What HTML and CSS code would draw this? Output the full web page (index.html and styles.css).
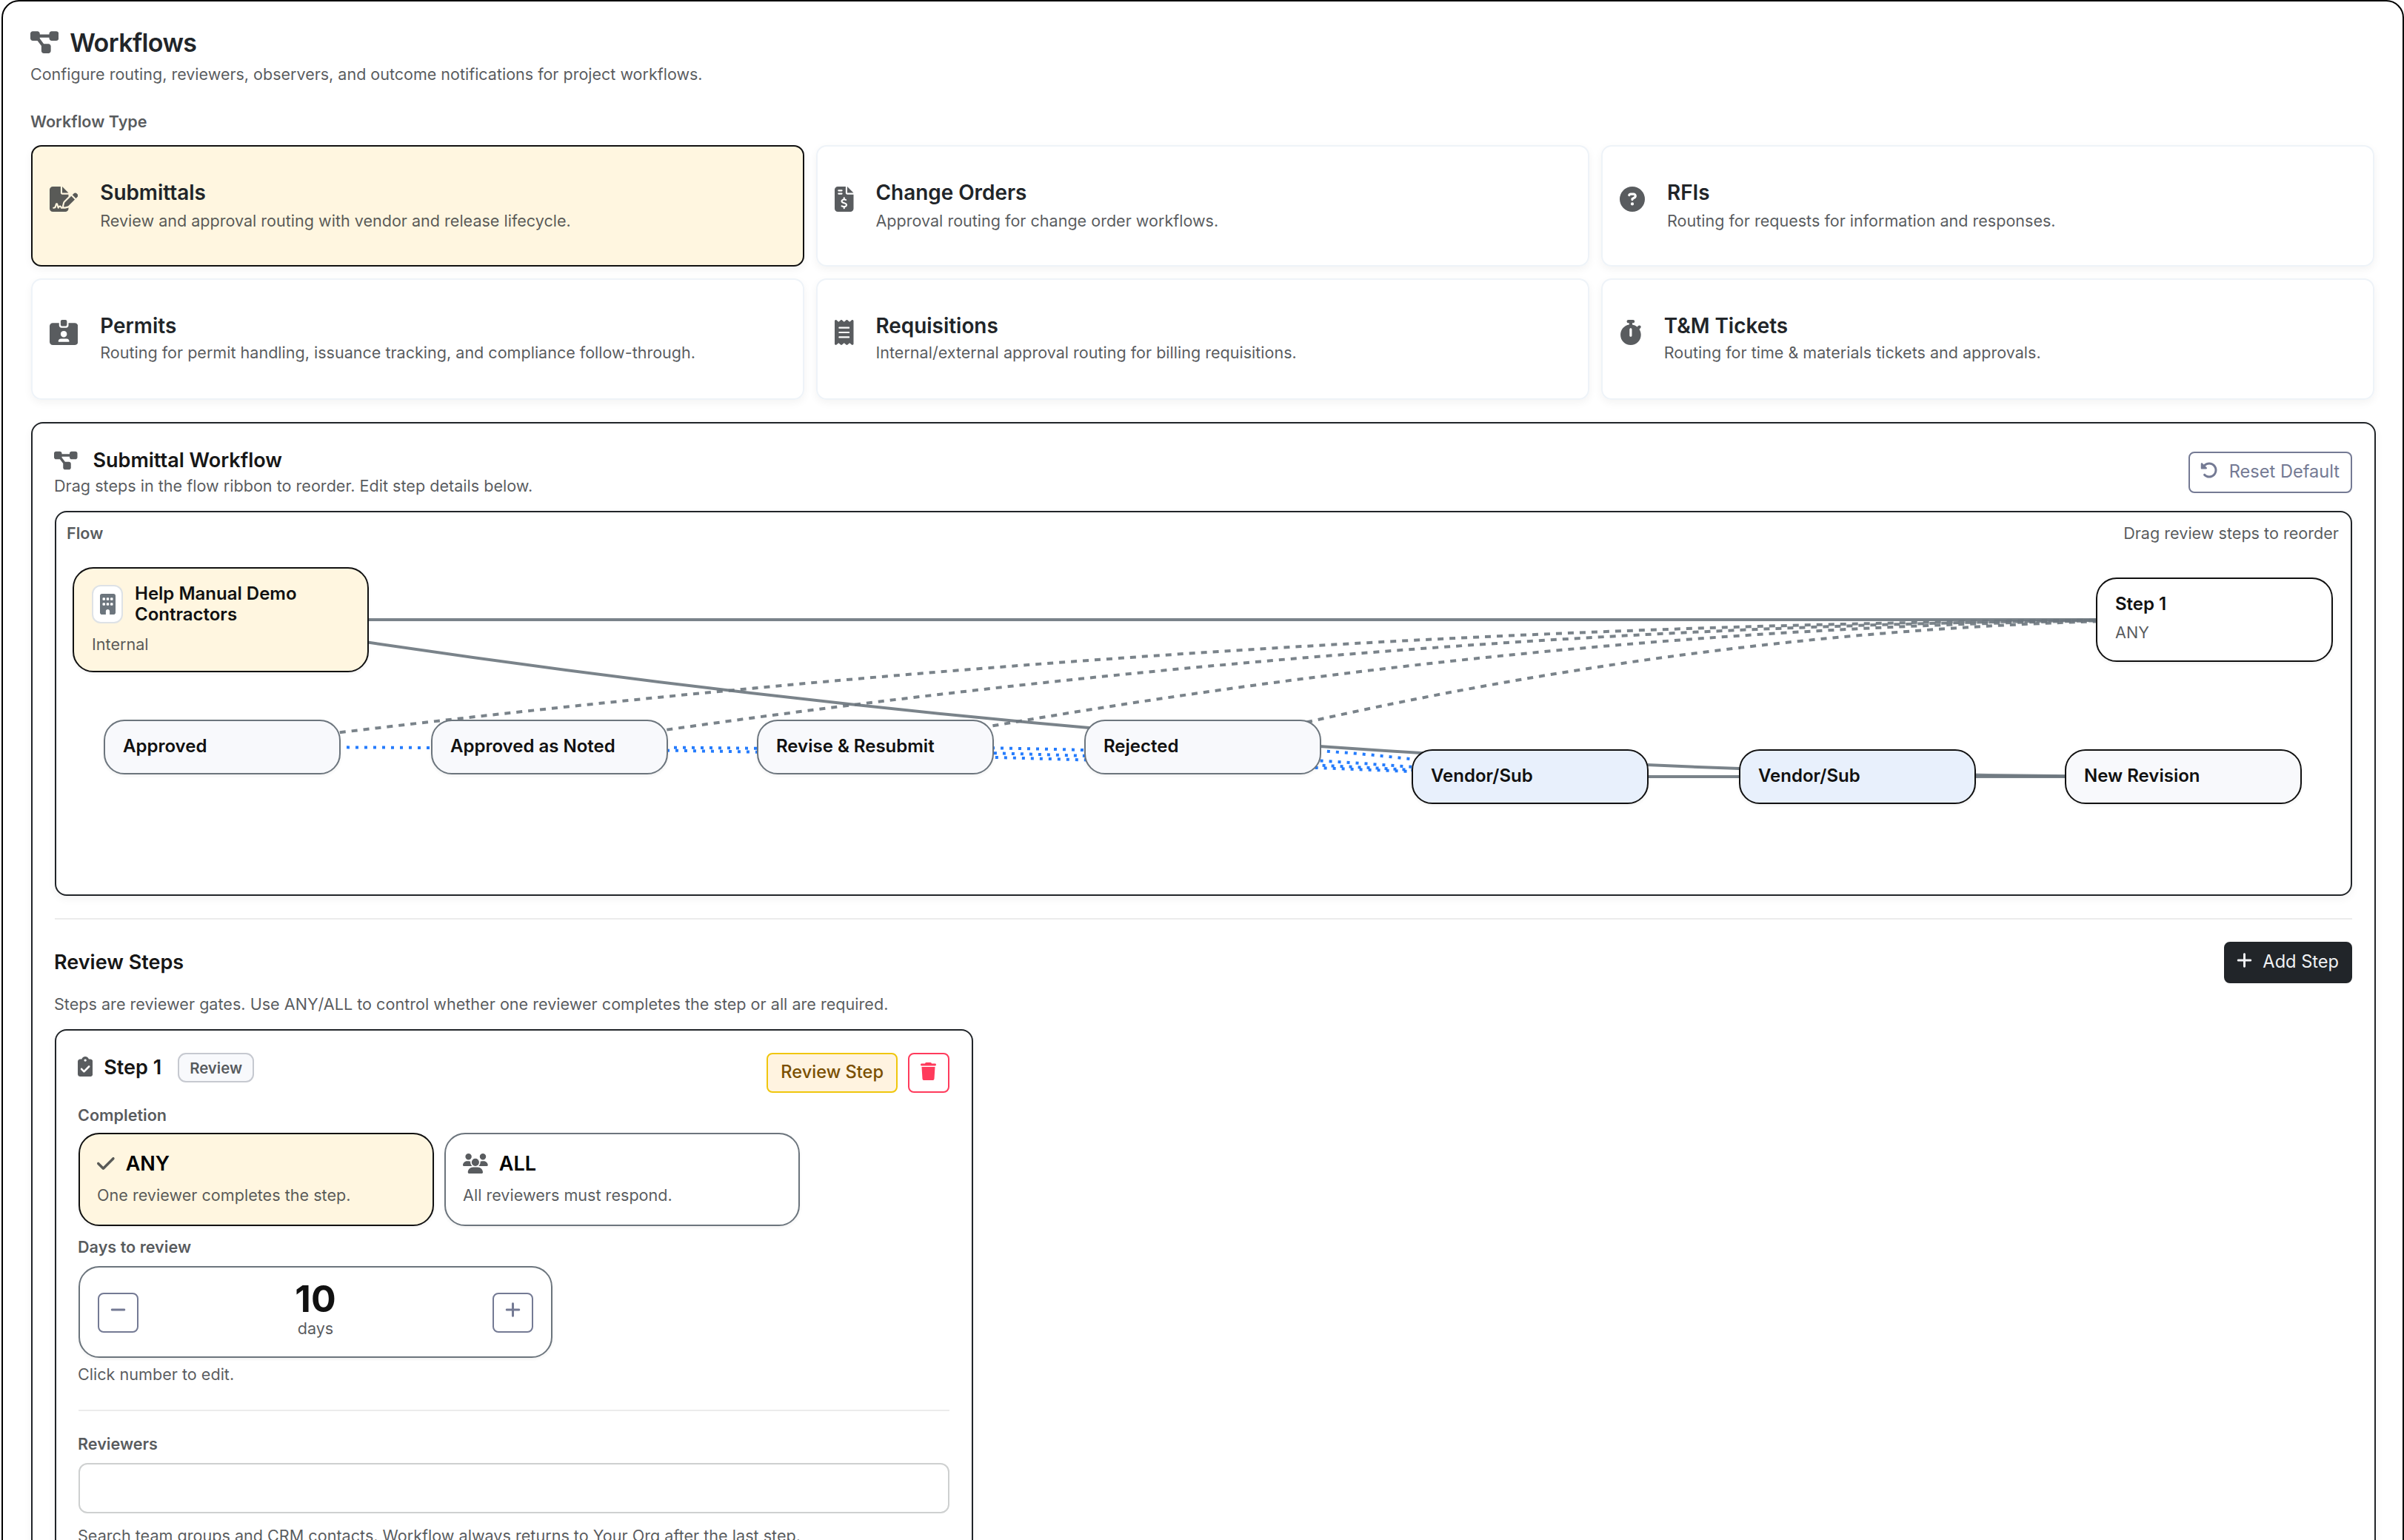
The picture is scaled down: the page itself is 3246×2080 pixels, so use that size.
FILE: index.html
```
<!DOCTYPE html>
<html lang="en">
<head>
    <meta charset="UTF-8">
    <title>Workflows</title>
    <link rel="stylesheet" href="styles.css">
</head>
<body>
    <div class="page">
        <div class="page-header">
            <svg class="icon" viewBox="0 0 576 512"><path d="M0 80C0 53.5 21.5 32 48 32h96c26.5 0 48 21.5 48 48V96H384V80c0-26.5 21.5-48 48-48h96c26.5 0 48 21.5 48 48v96c0 26.5-21.5 48-48 48H432c-26.5 0-48-21.5-48-48V160H192v16c0 1.7-.1 3.4-.3 5L272 288h96c26.5 0 48 21.5 48 48v96c0 26.5-21.5 48-48 48H272c-26.5 0-48-21.5-48-48V336c0-1.7 .1-3.4 .3-5L144 224H48c-26.5 0-48-21.5-48-48V80z"/></svg>
            <h1>Workflows</h1>
        </div>
        <p class="page-desc">Configure routing, reviewers, observers, and outcome notifications for project workflows.</p>

        <div class="label type-label">Workflow Type</div>
        <div class="type-grid">
            <div class="type-card selected">
                <svg class="icon" viewBox="0 0 576 512"><path d="M64 0C28.7 0 0 28.7 0 64V448c0 35.3 28.7 64 64 64H320c35.3 0 64-28.7 64-64V428.7c-2.7 1.1-5.4 2-8.2 2.7l-60.1 15c-3 .7-6 1.2-9 1.4c-.9 .1-1.8 .2-2.7 .2H240c-6.1 0-11.6-3.4-14.3-8.8l-8.8-17.7c-1.7-3.4-5.1-5.5-8.8-5.5s-7.2 2.1-8.8 5.5l-8.8 17.7c-2.9 5.9-9.2 9.4-15.7 8.8s-12.1-5.1-13.9-11.3L144 381l-9.8 32.8c-6.1 20.3-24.8 34.2-46 34.2H80c-8.8 0-16-7.2-16-16s7.2-16 16-16h8.2c7.1 0 13.3-4.6 15.3-11.4l14.9-49.5c3.4-11.3 13.8-19.1 25.6-19.1s22.2 7.7 25.6 19.1l11.6 38.6c7.4-6.2 16.8-9.7 26.8-9.7c15.9 0 30.4 9 37.5 23.2l4.4 8.8h8.9c-3.1-8.8-3.7-18.4-1.4-27.8l15-60.1c2.8-11.3 8.6-21.5 16.8-29.7L384 203.6V160H256c-17.7 0-32-14.3-32-32V0H64zM256 0V128H384L256 0zM549.8 139.7c-15.6-15.6-40.9-15.6-56.6 0l-29.4 29.4 71 71 29.4-29.4c15.6-15.6 15.6-40.9 0-56.6l-14.4-14.4zM311.9 321c-4.1 4.1-7 9.2-8.4 14.9l-15 60.1c-1.4 5.5 .2 11.2 4.2 15.2s9.7 5.6 15.2 4.2l60.1-15c5.6-1.4 10.8-4.3 14.9-8.4L512.1 262.7l-71-71L311.9 321z"/></svg>
                <div>
                    <h3>Submittals</h3>
                    <p>Review and approval routing with vendor and release lifecycle.</p>
                </div>
            </div>
            <div class="type-card">
                <svg class="icon" viewBox="0 0 384 512"><path d="M64 0C28.7 0 0 28.7 0 64V448c0 35.3 28.7 64 64 64H320c35.3 0 64-28.7 64-64V160H256c-17.7 0-32-14.3-32-32V0H64zM256 0V128H384L256 0zM64 80c0-8.8 7.2-16 16-16h64c8.8 0 16 7.2 16 16s-7.2 16-16 16H80c-8.8 0-16-7.2-16-16zm0 64c0-8.8 7.2-16 16-16h64c8.8 0 16 7.2 16 16s-7.2 16-16 16H80c-8.8 0-16-7.2-16-16zm128 72c8.8 0 16 7.2 16 16v17.3c8.5 1.2 16.7 3.1 24.1 5.1c8.5 2.3 13.6 11 11.3 19.6s-11 13.6-19.6 11.3c-11.1-3-22-5.2-32.1-5.3c-8.4-.1-17.4 1.8-23.6 5.5c-5.7 3.4-8.1 7.3-8.1 12.8c0 3.7 1.3 6.5 7.3 10.1c6.9 4.1 16.6 7.1 29.2 10.9l.5 .1c11.3 3.4 25.3 7.6 36.3 14.6c12.1 7.6 22.4 19.7 22.7 38.2c.3 19.3-9.6 33.3-22.9 41.6c-7.7 4.8-16.4 7.6-25.1 9.1V440c0 8.8-7.2 16-16 16s-16-7.2-16-16V422.2c-11.2-2.1-21.7-5.7-30.9-8.9c-2.1-.7-4.2-1.4-6.2-2.1c-8.4-2.8-12.9-11.9-10.1-20.2s11.9-12.9 20.2-10.1c2.5 .8 4.8 1.6 7.1 2.4c13.6 4.6 24.6 8.4 36.3 8.7c9.1 .3 17.9-1.7 23.7-5.3c5.1-3.2 7.9-7.3 7.8-14c-.1-4.6-1.8-7.8-7.7-11.6c-6.8-4.3-16.5-7.4-29-11.2l-1.6-.5c-11-3.3-24.3-7.3-34.8-13.7c-12-7.2-22.6-18.9-22.7-37.3c-.1-19.4 10.8-32.8 23.8-40.5c7.5-4.4 15.8-7.2 24.1-8.7V232c0-8.8 7.2-16 16-16z"/></svg>
                <div>
                    <h3>Change Orders</h3>
                    <p>Approval routing for change order workflows.</p>
                </div>
            </div>
            <div class="type-card">
                <svg class="icon" viewBox="0 0 512 512"><path d="M256 512A256 256 0 1 0 256 0a256 256 0 1 0 0 512zM169.8 165.3c7.9-22.3 29.1-37.3 52.8-37.3h58.3c34.9 0 63.1 28.3 63.1 63.1c0 22.6-12.1 43.5-31.7 54.8L280 264.4c-.2 13-10.9 23.6-24 23.6c-13.3 0-24-10.7-24-24V250.5c0-8.6 4.6-16.5 12.1-20.8l44.3-25.4c4.7-2.7 7.6-7.7 7.6-13.1c0-8.4-6.8-15.1-15.1-15.1H222.6c-3.4 0-6.4 2.1-7.5 5.3l-.4 1.2c-4.4 12.5-18.2 19-30.6 14.6s-19-18.2-14.6-30.6l.4-1.2zM224 352a32 32 0 1 1 64 0 32 32 0 1 1 -64 0z"/></svg>
                <div>
                    <h3>RFIs</h3>
                    <p>Routing for requests for information and responses.</p>
                </div>
            </div>
            <div class="type-card tight">
                <svg class="icon" viewBox="0 0 576 512"><path d="M256 0h64c17.7 0 32 14.3 32 32V96c0 17.7-14.3 32-32 32H256c-17.7 0-32-14.3-32-32V32c0-17.7 14.3-32 32-32zM64 64H192v48c0 26.5 21.5 48 48 48h96c26.5 0 48-21.5 48-48V64H512c35.3 0 64 28.7 64 64V448c0 35.3-28.7 64-64 64H64c-35.3 0-64-28.7-64-64V128C0 92.7 28.7 64 64 64zM176 437.3c0 5.9 4.8 10.7 10.7 10.7H389.3c5.9 0 10.7-4.8 10.7-10.7c0-29.5-23.9-53.3-53.3-53.3H229.3c-29.5 0-53.3 23.9-53.3 53.3zM288 352a64 64 0 1 0 0-128 64 64 0 1 0 0 128z"/></svg>
                <div>
                    <h3>Permits</h3>
                    <p>Routing for permit handling, issuance tracking, and compliance follow-through.</p>
                </div>
            </div>
            <div class="type-card tight">
                <svg class="icon" viewBox="0 0 384 512"><path d="M14 2.2C22.5-1.7 32.5-.3 39.6 5.8L80 40.4 120.4 5.8c9-7.7 22.3-7.7 31.2 0L192 40.4 232.4 5.8c9-7.7 22.3-7.7 31.2 0L304 40.4 344.4 5.8c7.1-6.1 17.1-7.5 25.6-3.6s14 12.4 14 21.8V488c0 9.4-5.5 17.9-14 21.8s-18.5 2.5-25.6-3.6L304 471.6l-40.4 34.6c-9 7.7-22.3 7.7-31.2 0L192 471.6l-40.4 34.6c-9 7.7-22.3 7.7-31.2 0L80 471.6 39.6 506.2c-7.1 6.1-17.1 7.5-25.6 3.6S0 497.4 0 488V24C0 14.6 5.5 6.1 14 2.2zM96 144c-8.8 0-16 7.2-16 16s7.2 16 16 16H288c8.8 0 16-7.2 16-16s-7.2-16-16-16H96zM80 352c0 8.8 7.2 16 16 16H288c8.8 0 16-7.2 16-16s-7.2-16-16-16H96c-8.8 0-16 7.2-16 16zM96 240c-8.8 0-16 7.2-16 16s7.2 16 16 16H288c8.8 0 16-7.2 16-16s-7.2-16-16-16H96z"/></svg>
                <div>
                    <h3>Requisitions</h3>
                    <p>Internal/external approval routing for billing requisitions.</p>
                </div>
            </div>
            <div class="type-card tight">
                <svg class="icon" viewBox="0 0 448 512"><path d="M176 0c-17.7 0-32 14.3-32 32s14.3 32 32 32h16V98.4C92.3 113.8 16 200 16 304c0 114.9 93.1 208 208 208s208-93.1 208-208c0-41.8-12.3-80.7-33.5-113.2l24.1-24.1c12.5-12.5 12.5-32.8 0-45.3s-32.8-12.5-45.3 0L355.7 143c-28.1-23-62.2-38.8-99.7-44.6V64h16c17.7 0 32-14.3 32-32s-14.3-32-32-32H224 176zm72 192V320c0 13.3-10.7 24-24 24s-24-10.7-24-24V192c0-13.3 10.7-24 24-24s24 10.7 24 24z"/></svg>
                <div>
                    <h3>T&amp;M Tickets</h3>
                    <p>Routing for time &amp; materials tickets and approvals.</p>
                </div>
            </div>
        </div>

        <div class="panel">
            <div class="panel-header">
                <div>
                    <div class="panel-title">
                        <svg class="icon" viewBox="0 0 576 512"><path d="M0 80C0 53.5 21.5 32 48 32h96c26.5 0 48 21.5 48 48V96H384V80c0-26.5 21.5-48 48-48h96c26.5 0 48 21.5 48 48v96c0 26.5-21.5 48-48 48H432c-26.5 0-48-21.5-48-48V160H192v16c0 1.7-.1 3.4-.3 5L272 288h96c26.5 0 48 21.5 48 48v96c0 26.5-21.5 48-48 48H272c-26.5 0-48-21.5-48-48V336c0-1.7 .1-3.4 .3-5L144 224H48c-26.5 0-48-21.5-48-48V80z"/></svg>
                        <h2>Submittal Workflow</h2>
                    </div>
                    <p>Drag steps in the flow ribbon to reorder. Edit step details below.</p>
                </div>
                <button class="btn btn-reset">
                    <svg class="icon" viewBox="0 0 512 512"><path d="M48.500 224H40c-13.300 0-24-10.700-24-24V72c0-9.700 5.800-18.500 14.800-22.200s19.300-1.700 26.200 5.200L98.600 96.600c87.600-86.500 228.700-86.200 315.800 1c87.500 87.500 87.500 229.300 0 316.800s-229.300 87.500-316.800 0c-12.500-12.500-12.500-32.800 0-45.300s32.800-12.500 45.300 0c62.500 62.500 163.800 62.500 226.300 0s62.500-163.800 0-226.300c-62.200-62.200-162.700-62.500-225.300-1L185 183c6.900 6.900 8.900 17.200 5.200 26.200s-12.500 14.800-22.200 14.800H48.500z"/></svg>
                    Reset Default
                </button>
            </div>

            <div class="flow">
                <div class="flow-header">
                    <span class="label">Flow</span>
                    <span>Drag review steps to reorder</span>
                </div>
                <!-- connectors run centre to centre, under the nodes -->
                <svg class="flow-lines" viewBox="76 692 3098 516">
                    <path class="line" d="M298 837H2990"/>
                    <path class="line" d="M298 837Q1623 1049 2948 1049"/>
                    <path class="line" d="M2066 1049H2507"/>
                    <path class="line" d="M2507 1049H2948"/>
                    <path class="line dashed" d="M300 1009Q1645 837 2990 837"/>
                    <path class="line dashed" d="M742 1009Q1866 837 2990 837"/>
                    <path class="line dashed" d="M1183 1009Q2086.500 837 2990 837"/>
                    <path class="line dashed" d="M1624 1009Q2307 837 2990 837"/>
                    <path class="line dotted" d="M300 1009Q1183 1009 2066 1049"/>
                    <path class="line dotted" d="M742 1009Q1404 1009 2066 1049"/>
                    <path class="line dotted" d="M1183 1009Q1624.500 1009 2066 1049"/>
                    <path class="line dotted" d="M1624 1009Q1845 1009 2066 1049"/>
                </svg>
                <div class="node node-org">
                    <div class="node-org-head">
                        <div class="node-icon">
                            <svg class="icon" viewBox="0 0 384 512"><path d="M48 0C21.500 0 0 21.500 0 48V464c0 26.500 21.500 48 48 48h96V432c0-26.500 21.500-48 48-48s48 21.500 48 48v80h96c26.500 0 48-21.500 48-48V48c0-26.500-21.500-48-48-48H48zM64 240c0-8.800 7.200-16 16-16h32c8.800 0 16 7.200 16 16v32c0 8.800-7.200 16-16 16H80c-8.800 0-16-7.200-16-16V240zm112-16h32c8.800 0 16 7.200 16 16v32c0 8.800-7.200 16-16 16H176c-8.800 0-16-7.200-16-16V240c0-8.800 7.200-16 16-16zm80 16c0-8.800 7.200-16 16-16h32c8.800 0 16 7.200 16 16v32c0 8.800-7.200 16-16 16H272c-8.800 0-16-7.200-16-16V240zM80 96h32c8.800 0 16 7.200 16 16v32c0 8.800-7.200 16-16 16H80c-8.800 0-16-7.200-16-16V112c0-8.800 7.200-16 16-16zm80 16c0-8.800 7.200-16 16-16h32c8.800 0 16 7.200 16 16v32c0 8.800-7.200 16-16 16H176c-8.800 0-16-7.200-16-16V112zM272 96h32c8.800 0 16 7.200 16 16v32c0 8.800-7.200 16-16 16H272c-8.800 0-16-7.200-16-16V112c0-8.800 7.200-16 16-16z"/></svg>
                        </div>
                        <div class="node-title">Help Manual Demo Contractors</div>
                    </div>
                    <div class="node-sub">Internal</div>
                </div>
                <div class="node node-step">
                    <div class="node-title">Step 1</div>
                    <div class="node-sub">ANY</div>
                </div>
                <div class="node outcome col-1"><div class="node-title">Approved</div></div>
                <div class="node outcome col-2"><div class="node-title">Approved as Noted</div></div>
                <div class="node outcome col-3"><div class="node-title">Revise &amp; Resubmit</div></div>
                <div class="node outcome col-4"><div class="node-title">Rejected</div></div>
                <div class="node vendor col-5"><div class="node-title">Vendor/Sub</div></div>
                <div class="node vendor col-6"><div class="node-title">Vendor/Sub</div></div>
                <div class="node revision col-7"><div class="node-title">New Revision</div></div>
            </div>

            <hr class="panel-divider">

            <div class="steps-header">
                <h2>Review Steps</h2>
                <button class="btn btn-dark">
                    <svg class="icon" viewBox="0 0 448 512"><path d="M256 80c0-17.700-14.300-32-32-32s-32 14.300-32 32V224H48c-17.700 0-32 14.300-32 32s14.300 32 32 32H192V432c0 17.700 14.300 32 32 32s32-14.300 32-32V288H400c17.700 0 32-14.300 32-32s-14.300-32-32-32H256V80z"/></svg>
                    Add Step
                </button>
            </div>
            <p class="steps-desc">Steps are reviewer gates. Use ANY/ALL to control whether one reviewer completes the step or all are required.</p>

            <div class="step-card">
                <div class="step-header">
                    <div class="step-title">
                        <svg class="icon" viewBox="0 0 384 512"><path fill-rule="evenodd" d="M192 0c-41.800 0-77.400 26.700-90.500 64H64C28.700 64 0 92.700 0 128V448c0 35.300 28.700 64 64 64H320c35.300 0 64-28.700 64-64V128c0-35.300-28.700-64-64-64H282.500C269.400 26.700 233.800 0 192 0zm0 64a32 32 0 1 1 0 64 32 32 0 1 1 0-64zM305 273L177 401c-9.400 9.400-24.600 9.400-33.900 0L79 337c-9.400-9.400-9.400-24.600 0-33.900s24.600-9.400 33.900 0l47 47L271 239c9.400-9.400 24.600-9.400 33.900 0s9.400 24.600 0 33.900z"/></svg>
                        <h3>Step 1</h3>
                        <span class="badge">Review</span>
                    </div>
                    <div class="step-actions">
                        <button class="btn btn-warn">Review Step</button>
                        <button class="btn btn-delete">
                            <svg class="icon" viewBox="0 0 448 512"><path d="M135.200 17.700L128 32H32C14.300 32 0 46.300 0 64S14.300 96 32 96H416c17.700 0 32-14.300 32-32s-14.300-32-32-32H320l-7.200-14.300C307.400 6.800 296.300 0 284.200 0H163.800c-12.100 0-23.200 6.800-28.600 17.700zM416 128H32L53.200 467c1.600 25.300 22.600 45 47.900 45H346.900c25.300 0 46.300-19.700 47.900-45L416 128z"/></svg>
                        </button>
                    </div>
                </div>

                <div class="label completion-label">Completion</div>
                <div class="choices">
                    <div class="choice selected">
                        <div class="choice-title">
                            <svg class="icon" viewBox="0 0 448 512"><path d="M438.600 105.400c12.500 12.500 12.500 32.800 0 45.300l-256 256c-12.500 12.500-32.800 12.500-45.300 0l-128-128c-12.500-12.500-12.500-32.800 0-45.300s32.800-12.500 45.300 0L160 338.700 393.400 105.400c12.500-12.500 32.800-12.500 45.300 0z"/></svg>
                            <h3>ANY</h3>
                        </div>
                        <p>One reviewer completes the step.</p>
                    </div>
                    <div class="choice">
                        <div class="choice-title">
                            <svg class="icon" viewBox="0 0 640 512"><path d="M144 0a80 80 0 1 1 0 160A80 80 0 1 1 144 0zM512 0a80 80 0 1 1 0 160A80 80 0 1 1 512 0zM0 298.700C0 239.800 47.800 192 106.700 192h42.700c15.900 0 31 3.500 44.600 9.700c-1.300 7.200-1.900 14.700-1.900 22.300c0 38.200 16.800 72.500 43.300 96c-.2 0-.4 0-.7 0H21.300C9.600 320 0 310.400 0 298.700zM405.300 320c-.2 0-.4 0-.7 0c26.600-23.500 43.300-57.800 43.300-96c0-7.600-.7-15-1.900-22.300c13.600-6.300 28.700-9.700 44.600-9.700h42.700C592.200 192 640 239.800 640 298.700c0 11.800-9.600 21.300-21.300 21.300H405.300zM224 224a96 96 0 1 1 192 0 96 96 0 1 1 -192 0zM128 485.300C128 411.700 187.700 352 261.300 352H378.700C452.300 352 512 411.700 512 485.300c0 14.700-11.900 26.700-26.700 26.700H154.700c-14.700 0-26.700-11.900-26.700-26.700z"/></svg>
                            <h3>ALL</h3>
                        </div>
                        <p>All reviewers must respond.</p>
                    </div>
                </div>

                <div class="label days-label">Days to review</div>
                <div class="stepper">
                    <button class="btn btn-stepper">
                        <svg class="icon" viewBox="0 0 448 512"><path d="M432 256c0 17.700-14.300 32-32 32L48 288c-17.700 0-32-14.300-32-32s14.300-32 32-32l352 0c17.700 0 32 14.300 32 32z"/></svg>
                    </button>
                    <div class="stepper-value">
                        <div class="number">10</div>
                        <div class="unit">days</div>
                    </div>
                    <button class="btn btn-stepper">
                        <svg class="icon" viewBox="0 0 448 512"><path d="M256 80c0-17.700-14.300-32-32-32s-32 14.300-32 32V224H48c-17.700 0-32 14.300-32 32s14.300 32 32 32H192V432c0 17.700 14.300 32 32 32s32-14.300 32-32V288H400c17.700 0 32-14.300 32-32s-14.300-32-32-32H256V80z"/></svg>
                    </button>
                </div>
                <p class="hint">Click number to edit.</p>

                <hr class="step-divider">

                <div class="label reviewers-label">Reviewers</div>
                <div class="input"></div>
                <p class="search-hint">Search team groups and CRM contacts. Workflow always returns to Your Org after the last step.</p>
            </div>
        </div>
    </div>
</body>
</html>
```
FILE: styles.css
```
* {
    box-sizing: border-box;
}

body {
    margin: 0;
    height: 2080px;
    overflow: hidden;
    background: #fff;
    color: #212529;
    font-family: Inter, sans-serif;
    font-size: 21.6px;
    line-height: 28px;
}

h1, h2, h3, p, hr {
    margin: 0;
    font-weight: 600;
}

h2, h3 {
    font-size: 27px;
    line-height: 36px;
}

p {
    color: rgba(33, 37, 41, 0.75);
    font-weight: 400;
}

hr {
    border: 0;
    height: 2px;
    background: #ebebeb;
}

.icon {
    display: block;
    flex: none;
    height: 34px;
    fill: rgba(33, 37, 41, 0.75);
}

.label {
    color: rgba(33, 37, 41, 0.75);
    font-weight: 600;
}

.page {
    margin-left: 2px;
    height: 2400px;
    padding: 34px 36px 0 38px;
    border: 2px solid #000;
    border-radius: 24px;
}

.page-header {
    display: flex;
    gap: 15px;
    margin-left: -1px;
}

.page-header .icon {
    margin-top: 4px;
}

h1 {
    font-size: 34px;
    line-height: 44px;
    letter-spacing: -0.6px;
}

.page-desc {
    margin: 4px 0 0 -1px;
    font-size: 21.5px;
    line-height: 32px;
}

.type-label {
    margin: 32px 0 16px -1px;
    line-height: 32px;
}

/* workflow type cards */
.type-grid {
    display: grid;
    grid-template-columns: repeat(3, 1fr);
    gap: 16px;
    margin-right: 2px;
}

.type-card {
    display: flex;
    gap: 30px;
    height: 164px;
    padding: 44px 23px 0;
    border: 2px solid #eef3f8;
    border-radius: 14px;
    box-shadow: 0 4px 12px rgba(0, 0, 0, 0.05);
}

.type-card.selected {
    background: #fff6e0;
    border-color: #111;
}

.type-card .icon {
    margin-top: 10px;
}

.type-card h3 {
    font-size: 27.9px;
}

.type-card p {
    margin-top: 6px;
    font-size: 21.55px;
}

.type-card.tight p {
    margin-top: 4px;
}

/* main panel */
.panel {
    height: 1800px;
    margin-top: 30px;
    padding: 32px 30px 0;
    border: 2px solid #212529;
    border-radius: 16px;
    box-shadow: 0 4px 12px rgba(0, 0, 0, 0.05);
}

.panel h2 {
    color: #161616;
}

.panel-header {
    display: flex;
    justify-content: space-between;
    align-items: flex-start;
    height: 86px;
}

.panel-title {
    display: flex;
    gap: 21px;
    margin-left: -1px;
}

.panel-title .icon {
    height: 28px;
    margin-top: 4px;
}

.panel-header p {
    margin: 2px 0 0 -1px;
}

.btn {
    display: flex;
    margin: 0;
    padding: 0 18px;
    height: 56px;
    border: 2px solid;
    border-radius: 8px;
    background: transparent;
    font-family: inherit;
    font-size: 23.6px;
    line-height: 36px;
    white-space: nowrap;
}

.btn .icon {
    height: 24px;
    fill: currentColor;
}

.btn-reset {
    gap: 15px;
    margin-top: 6px;
    padding: 7px 15px 0 14px;
    color: #747a94;
}

.btn-reset .icon {
    margin-top: 4px;
}

/* flow ribbon */
.flow {
    position: relative;
    height: 520px;
    border: 2px solid #212529;
    border-radius: 16px;
    box-shadow: 0 4px 12px rgba(0, 0, 0, 0.05);
}

.flow-header {
    display: flex;
    justify-content: space-between;
    padding: 14px 16px 0 14px;
    color: rgba(33, 37, 41, 0.75);
}

.flow-lines {
    position: absolute;
    inset: 0;
    width: 3098px;
    height: 516px;
}

.line {
    fill: none;
    stroke: #6c757d;
    stroke-width: 4;
    opacity: 0.9;
}

.line.dashed {
    stroke-dasharray: 8 8;
}

.line.dotted {
    stroke: #0d6efd;
    stroke-dasharray: 4 8;
}

.node {
    position: absolute;
    width: 320px;
    height: 74px;
    padding: 20px 24px 0;
    border: 2px solid #111;
    border-radius: 28px;
    background: #fff;
    box-shadow: 0 2px 4px rgba(0, 0, 0, 0.06);
}

.node-title {
    color: #111;
    font-size: 24px;
    font-weight: 600;
    line-height: 28px;
}

.node-sub {
    color: rgba(33, 37, 41, 0.75);
}

.node-org {
    left: 22px;
    top: 74px;
    width: 400px;
    height: 142px;
    background: #fff6e0;
}

.node-org-head {
    display: flex;
    gap: 16px;
}

.node-icon {
    display: flex;
    flex: none;
    justify-content: center;
    width: 42px;
    height: 52px;
    margin-top: 2px;
    padding-top: 10px;
    border: 2px solid #dee2e6;
    border-radius: 12px;
    background: #fff;
}

.node-icon .icon {
    height: 28px;
    fill: #6c757d;
}

.node-org .node-sub {
    margin-top: 12px;
}

.node-step {
    left: 2754px;
    top: 88px;
    height: 114px;
}

.node-step .node-sub {
    margin-top: 10px;
}

.outcome {
    top: 280px;
    border-color: #6c757d;
    background: #f8f9fc;
}

.vendor,
.revision {
    top: 320px;
    background: #e8f0fc;
}

.revision {
    background: #f8f9fc;
}

.col-1 { left: 64px; }
.col-2 { left: 506px; }
.col-3 { left: 946px; }
.col-4 { left: 1388px; }
.col-5 { left: 1830px; }
.col-6 { left: 2272px; }
.col-7 { left: 2712px; }

/* review steps */
.panel-divider {
    margin: 30px 0;
}

.steps-header {
    display: flex;
    justify-content: space-between;
    align-items: center;
    margin-left: -1px;
}

.btn-dark {
    gap: 14px;
    padding: 7px 16px 0 15px;
    border-color: #212529;
    background: #212529;
    color: #f0f2f4;
}

.btn-dark .icon {
    margin-top: 4px;
}

.steps-desc {
    margin: 12px 0 18px -1px;
    line-height: 32px;
}

.step-card {
    width: 1240px;
    height: 1000px;
    padding: 30px;
    border: 2px solid #212529;
    border-radius: 16px;
    box-shadow: 0 4px 12px rgba(0, 0, 0, 0.05);
}

.step-header {
    display: flex;
    justify-content: space-between;
    height: 54px;
}

.step-title {
    display: flex;
    margin-left: -1px;
}

.step-title .icon {
    height: 27px;
    margin-top: 5px;
}

.step-title h3 {
    margin: 2px 0 0 15px;
    color: #161616;
}

.badge {
    height: 40px;
    margin-left: 22px;
    padding: 0 14px;
    border: 2px solid #c6c9d0;
    border-radius: 11px;
    background: #f8f9fc;
    color: rgba(33, 37, 41, 0.75);
    font-size: 20.4px;
    font-weight: 600;
    line-height: 38px;
}

.step-actions {
    display: flex;
    gap: 14px;
}

.btn-warn {
    height: 54px;
    padding: 6px 17px 0;
    border-color: #f0c60c;
    background: #fff3e0;
    color: #7a4f00;
    font-weight: 500;
}

.btn-delete {
    width: 56px;
    height: 54px;
    padding: 11px 15px 0;
    color: #ff3b5c;
}

.completion-label {
    margin: 16px 0 10px -1px;
}

.choices {
    display: flex;
    gap: 14px;
}

.choice {
    width: 480px;
    height: 126px;
    padding: 24px 24px 0;
    border: 2px solid #6c757d;
    border-radius: 28px;
    box-shadow: 0 2px 4px rgba(0, 0, 0, 0.06);
}

.choice.selected {
    border-color: #111;
    background: #fff6e0;
}

.choice-title {
    display: flex;
    gap: 15px;
    margin-left: -1px;
}

.choice-title .icon {
    height: 27px;
    margin-top: 2px;
}

.choice-title h3 {
    color: #000;
    line-height: 32px;
}

.choice p {
    margin: 12px 0 0 -1px;
}

.days-label {
    margin: 14px 0 12px -1px;
}

.stepper {
    display: flex;
    justify-content: space-between;
    width: 640px;
    height: 124px;
    padding: 10px 24px 0;
    border: 2px solid #6c757d;
    border-radius: 28px;
    box-shadow: 0 2px 4px rgba(0, 0, 0, 0.06);
}

.btn-stepper {
    height: 54px;
    margin-top: 24px;
    padding: 9px 15px 0;
    color: #747a94;
}

.stepper-value {
    padding-top: 2px;
    text-align: center;
}

.number {
    color: #111;
    font-size: 50px;
    font-weight: 700;
    line-height: 60px;
}

.unit {
    color: rgba(33, 37, 41, 0.75);
    line-height: 20px;
}

.hint {
    margin: 8px 0 34px -1px;
}

.reviewers-label {
    margin: 30px 0 12px -1px;
}

.input {
    height: 68px;
    border: 2px solid #ced0d0;
    border-radius: 12px;
}

.search-hint {
    margin: 16px 0 0 -1px;
}
```
